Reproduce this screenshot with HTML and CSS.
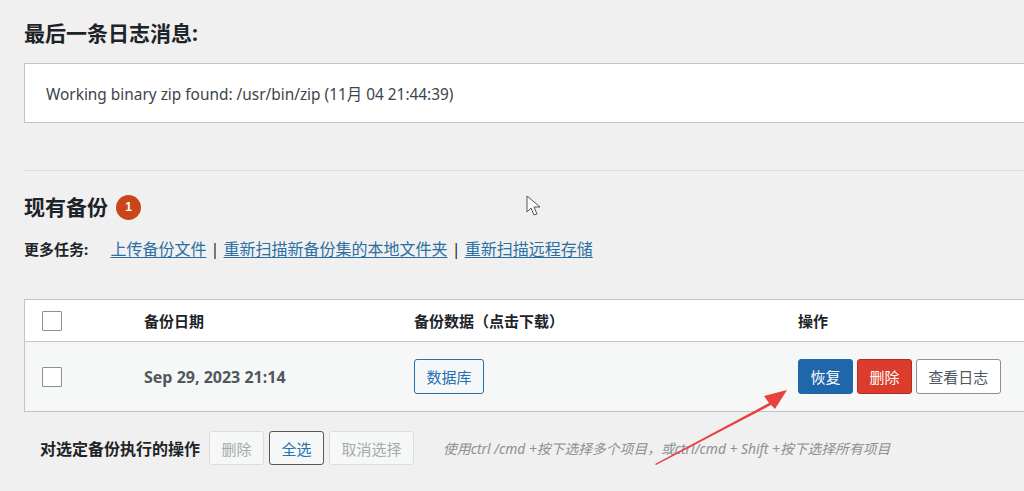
FILE: index.html
```html
<!DOCTYPE html>
<html lang="zh-CN">
<head>
    <meta charset="UTF-8">
    <meta name="viewport" content="width=device-width, initial-scale=1.0">
    <title>UpdraftPlus 备份</title>
    <link rel="stylesheet" href="styles.css">
</head>
<body>
    <div class="wrap">
        <h2 class="section-title">最后一条日志消息:</h2>
        <div class="log-box">Working binary zip found: /usr/bin/zip (11月 04 21:44:39)</div>

        <hr class="divider">

        <h2 class="section-title existing">现有备份 <span class="count-badge">1</span></h2>
        <p class="more-tasks">
            <strong>更多任务:</strong>
            <a href="#">上传备份文件</a> | <a href="#">重新扫描新备份集的本地文件夹</a> | <a href="#">重新扫描远程存储</a>
        </p>

        <table class="backups">
            <thead>
                <tr>
                    <th class="col-cb"><span class="checkbox"></span></th>
                    <th class="col-date">备份日期</th>
                    <th class="col-data">备份数据（点击下载）</th>
                    <th class="col-actions">操作</th>
                </tr>
            </thead>
            <tbody>
                <tr>
                    <td class="col-cb"><span class="checkbox"></span></td>
                    <td class="col-date date">Sep 29, 2023 21:14</td>
                    <td class="col-data"><button class="btn btn-outline">数据库</button></td>
                    <td class="col-actions">
                        <button class="btn btn-primary">恢复</button>
                        <button class="btn btn-danger">删除</button>
                        <button class="btn btn-plain">查看日志</button>
                    </td>
                </tr>
            </tbody>
        </table>

        <div class="bulk-actions">
            <strong>对选定备份执行的操作</strong>
            <button class="btn btn-disabled">删除</button>
            <button class="btn btn-select">全选</button>
            <button class="btn btn-disabled">取消选择</button>
            <em class="hint">使用ctrl /cmd +按下选择多个项目，或ctrl/cmd + Shift +按下选择所有项目</em>
        </div>
    </div>

    <!-- mouse cursor in the screenshot -->
    <svg class="cursor" width="16" height="22" viewBox="0 0 16 22">
        <path d="M1 1 L1 17 L5 13 L8 20 L11 19 L8 12 L14 12 Z" fill="#fff" stroke="#555" stroke-width="1"/>
    </svg>

    <!-- red annotation arrow -->
    <svg class="annotation" width="140" height="80" viewBox="0 0 140 80">
        <path d="M2 76 L116 15 L111 8 L134 2 L122 21 L118 17 L3 77 Z" fill="#e8413e"/>
    </svg>
</body>
</html>
```

FILE: styles.css
```css
html, body {
    margin: 0;
    padding: 0;
}
body {
    font-family: "Noto Sans", "Noto Sans CJK SC", sans-serif;
    font-size: 15px;
    color: #3c434a;
    background-color: #f0f0f1;
    overflow: hidden;
    position: relative;
    height: 491px;
}
.wrap {
    padding: 19px 0 0 24px;
    margin-right: -30px;
}
.section-title {
    font-size: 21px;
    font-weight: bold;
    color: #1d2327;
    margin: 0;
    line-height: 28px;
}
.log-box {
    background-color: #fff;
    border: 1px solid #c3c4c7;
    margin-top: 16px;
    padding: 0 21px;
    height: 58px;
    line-height: 62px;
    font-size: 15.4px;
    color: #3c434a;
    white-space: nowrap;
}
.divider {
    border: 0;
    border-top: 1px solid #dcdcde;
    margin: 47px 0 0 0;
}
.existing {
    margin-top: 22px;
    display: flex;
    align-items: center;
    gap: 8px;
}
.count-badge {
    display: inline-flex;
    align-items: center;
    justify-content: center;
    width: 25px;
    height: 25px;
    border-radius: 50%;
    background-color: #c9461a;
    color: #fff;
    font-size: 12px;
    font-weight: bold;
    font-family: "Liberation Sans", sans-serif;
}
.more-tasks {
    margin: 16px 0 0 0;
    font-size: 16px;
    line-height: 24px;
    color: #1d2327;
}
.more-tasks strong {
    font-size: 15px;
    margin-right: 18px;
}
.more-tasks a {
    color: #2a6fa3;
    text-decoration: underline;
    text-underline-offset: 2px;
}
table.backups {
    width: 100%;
    border-collapse: collapse;
    table-layout: fixed;
    margin-top: 38px;
    border: 1px solid #c3c4c7;
}
.backups th, .backups td {
    text-align: left;
    padding: 0 17px;
    vertical-align: middle;
}
.backups thead tr {
    background-color: #fff;
    height: 42px;
    border-bottom: 1px solid #c3c4c7;
}
.backups th {
    font-size: 15px;
    font-weight: bold;
    color: #1d2327;
}
.backups tbody tr {
    background-color: #f6f7f7;
    height: 70px;
}
.col-cb { width: 68px; }
.col-date { width: 236px; }
.col-data { width: 350px; }
.checkbox {
    display: block;
    width: 18px;
    height: 18px;
    border: 1px solid #8c8f94;
    background-color: #fff;
    border-radius: 1px;
}
.date {
    font-weight: bold;
    font-size: 16px;
    color: #50575e;
}
.btn {
    font-family: "Noto Sans", "Noto Sans CJK SC", sans-serif;
    font-size: 15px;
    height: 35px;
    padding: 0 11.5px;
    border-radius: 3px;
    border: 1px solid #2271b1;
    cursor: pointer;
    vertical-align: middle;
}
.btn-outline {
    background-color: #f6f7f7;
    color: #2271b1;
}
.btn-primary {
    background-color: #1f66ab;
    border-color: #1f66ab;
    color: #fff;
}
.btn-danger {
    background-color: #dc3c2c;
    border-color: #b32d1f;
    color: #fff;
}
.btn-plain {
    background-color: #fff;
    border-color: #8c8f94;
    color: #50575e;
}
.bulk-actions {
    display: flex;
    align-items: center;
    gap: 5px;
    margin-top: 19px;
    padding-left: 16px;
}
.bulk-actions strong {
    font-size: 16px;
    color: #1d2327;
    margin-right: 4px;
}
.bulk-actions .btn {
    height: 34px;
}
.btn-disabled {
    background-color: #f6f7f7;
    border-color: #dcdcde;
    color: #a7aaad;
}
.btn-select {
    background-color: #f6f7f7;
    border-color: #50575e;
    color: #2271b1;
}
.hint {
    margin-left: 24px;
    font-size: 13.8px;
    color: #8c8f94;
}
.cursor {
    position: absolute;
    left: 526px;
    top: 195px;
}
.annotation {
    position: absolute;
    left: 653px;
    top: 388px;
}
```
